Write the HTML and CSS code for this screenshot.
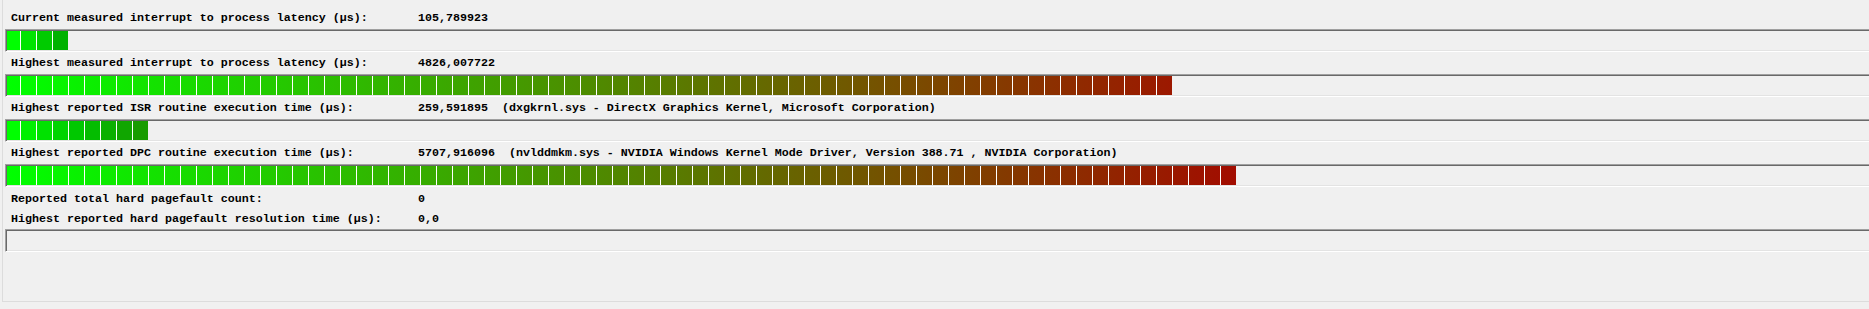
FILE: index.html
```html
<!DOCTYPE html>
<html>
<head>
<meta charset="utf-8">
<link rel="stylesheet" href="styles.css">
</head>
<body>
<div class="panel">
  <div class="row"><span class="label">Current measured interrupt to process latency (µs):</span><span class="value">105,789923</span></div>
  <div class="track"><div class="bar bar-current"></div></div>

  <div class="row"><span class="label">Highest measured interrupt to process latency (µs):</span><span class="value">4826,007722</span></div>
  <div class="track"><div class="bar bar-highest"></div></div>

  <div class="row"><span class="label">Highest reported ISR routine execution time (µs):</span><span class="value">259,591895  (dxgkrnl.sys - DirectX Graphics Kernel, Microsoft Corporation)</span></div>
  <div class="track"><div class="bar bar-isr"></div></div>

  <div class="row"><span class="label">Highest reported DPC routine execution time (µs):</span><span class="value">5707,916096  (nvlddmkm.sys - NVIDIA Windows Kernel Mode Driver, Version 388.71 , NVIDIA Corporation)</span></div>
  <div class="track"><div class="bar bar-dpc"></div></div>

  <div class="row row-small row-gap"><span class="label">Reported total hard pagefault count:</span><span class="value">0</span></div>
  <div class="row row-small"><span class="label">Highest reported hard pagefault resolution time (µs):</span><span class="value">0,0</span></div>
  <div class="track"></div>
</div>
</body>
</html>
```

FILE: styles.css
```css
html, body {
  margin: 0;
  padding: 0;
  overflow: hidden;
  background: #f0f0f0;
}

body {
  width: 1869px;
  height: 309px;
  font-family: "Liberation Mono", "Courier New", monospace;
  font-size: 11.67px;
  font-weight: bold;
  color: #000;
}

.panel {
  margin-left: 2px;
  margin-right: -40px;
  padding: 7px 0 49px 2px;
  border-left: 1px solid #dcdcdc;
  border-bottom: 1px solid #dcdcdc;
}

.row {
  display: grid;
  grid-template-columns: 407px auto;
  height: 22px;
  line-height: 22px;
  padding-left: 6px;
  white-space: pre;
}

.row-small {
  height: 20px;
  line-height: 20px;
}

.row-gap {
  margin-top: 2px;
}

.track {
  height: 19px;
  padding: 1px 0 1px 1px;
  border-top: 1px solid #a0a0a0;
  border-left: 1px solid #a0a0a0;
  border-bottom: 1px solid #ffffff;
  box-shadow: inset 1px 1px 0 #696969, inset 0 -1px 0 #e3e3e3;
}

.bar {
  height: 19px;
  background-repeat: repeat-x, no-repeat;
  background-size: 16px 100%, 100% 100%;
  background-position: -2px 0, 0 0;
}

.bar-current {
  width: 61px;
  background-image:
    linear-gradient(90deg, transparent 15px, #ffffff 15px),
    linear-gradient(90deg, #00ff00 0 14px, #00e400 14px 30px, #00cb00 30px 46px, #00b200 46px);
}

.bar-highest {
  width: 1165px;
  background-image:
    linear-gradient(90deg, transparent 15px, #ffffff 15px),
    linear-gradient(90deg, #00ff00, #9c1800);
}

.bar-isr {
  width: 141px;
  background-image:
    linear-gradient(90deg, transparent 15px, #ffffff 15px),
    linear-gradient(90deg,
      #00ff00 0 14px, #00f000 14px 30px, #00e200 30px 46px,
      #00d400 46px 62px, #00c800 62px 78px, #04bc00 78px 94px,
      #0ab000 94px 110px, #10a600 110px 126px, #189c00 126px);
}

.bar-dpc {
  width: 1229px;
  background-image:
    linear-gradient(90deg, transparent 15px, #ffffff 15px),
    linear-gradient(90deg, #00ff00, #a20c00);
}
```
